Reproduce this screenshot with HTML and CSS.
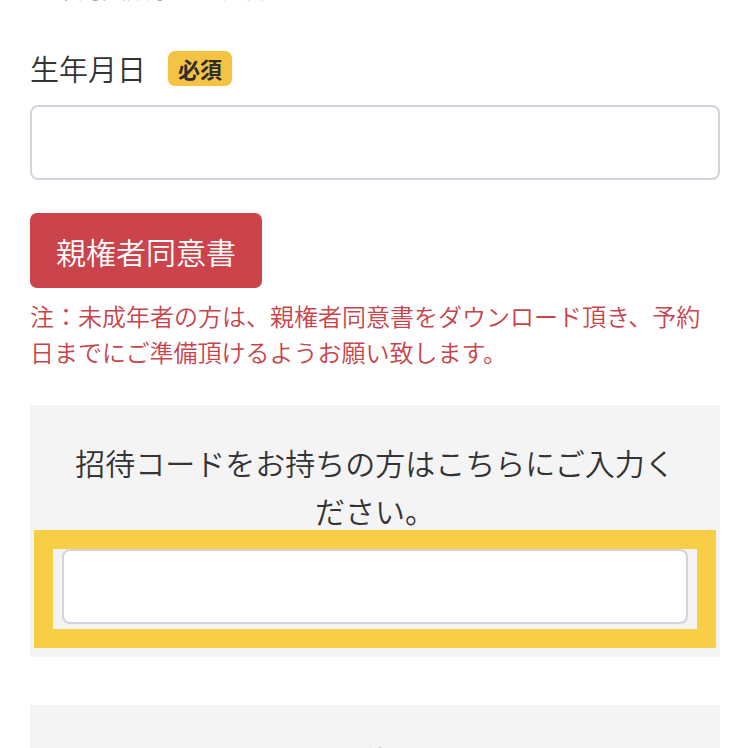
FILE: index.html
```html
<!DOCTYPE html>
<html lang="ja">
<head>
<meta charset="utf-8">
<title>予約フォーム</title>
<link rel="stylesheet" href="styles.css">
</head>
<body>
<div class="page">
  <p class="prev-note">※半角英数字でご入力ください</p>

  <div class="field-label">
    <span class="label-text">生年月日</span>
    <span class="badge">必須</span>
  </div>
  <input class="text-input" type="text">

  <button class="consent-btn" type="button">親権者同意書</button>
  <p class="warn">注：未成年者の方は、親権者同意書をダウンロード頂き、予約日までにご準備頂けるようお願い致します。</p>

  <section class="panel">
    <p class="panel-text">招待コードをお持ちの方はこちらにご入力ください。</p>
    <div class="code-wrap">
      <input class="text-input code-input" type="text">
    </div>
  </section>

  <section class="panel panel-next">
    <p class="panel-text">アンケートにご協力ください。</p>
  </section>
</div>
</body>
</html>
```

FILE: styles.css
```css
* { box-sizing: border-box; }

html, body {
  margin: 0;
  padding: 0;
  background: #ffffff;
  overflow: hidden;
}

body {
  font-family: "Noto Sans CJK JP", "Noto Sans", sans-serif;
  font-weight: 350;
  color: #333333;
}

.page {
  padding: 0 30px;
}

.prev-note {
  margin: -30px 0 0;
  font-size: 24px;
  line-height: 36px;
  color: #666666;
}

.field-label {
  display: flex;
  align-items: center;
  gap: 22px;
  height: 40px;
  margin-top: 42px;
}

.label-text {
  font-size: 29px;
  line-height: 40px;
  color: #333333;
}

.badge {
  display: inline-flex;
  align-items: center;
  justify-content: center;
  height: 35px;
  padding: 0 10px;
  background: #f5c343;
  color: #2e2e2e;
  font-size: 22px;
  font-weight: 700;
  border-radius: 7px;
}

.text-input {
  display: block;
  width: 100%;
  height: 75px;
  margin-top: 17px;
  border: 2px solid #d3d4db;
  border-radius: 8px;
  background: #ffffff;
  font-size: 28px;
  padding: 0 16px;
  outline: none;
}

.consent-btn {
  display: inline-flex;
  align-items: center;
  height: 75px;
  margin-top: 33px;
  padding: 0 26px;
  border: none;
  border-radius: 7px;
  background: #cb444b;
  color: #ffffff;
  font-family: inherit;
  font-weight: 350;
  font-size: 30px;
}

.warn {
  margin: 10px 0 0;
  font-size: 24px;
  line-height: 36px;
  color: #c9434a;
}

.panel {
  margin-top: 35px;
  padding: 33px 23px 28px;
  background: #f4f4f4;
}

.panel-text {
  margin: 0;
  padding: 0 17px;
  font-size: 30px;
  line-height: 48px;
  text-align: center;
  color: #333333;
}

.code-wrap {
  margin-top: 15px;
  padding: 0 9px 5px;
  background: #f4f4f4;
  outline: 19px solid #f7cf47;
}

.code-input {
  margin-top: 0;
}

.panel-next {
  margin-top: 48px;
  padding-top: 31px;
  height: 200px;
}
```
